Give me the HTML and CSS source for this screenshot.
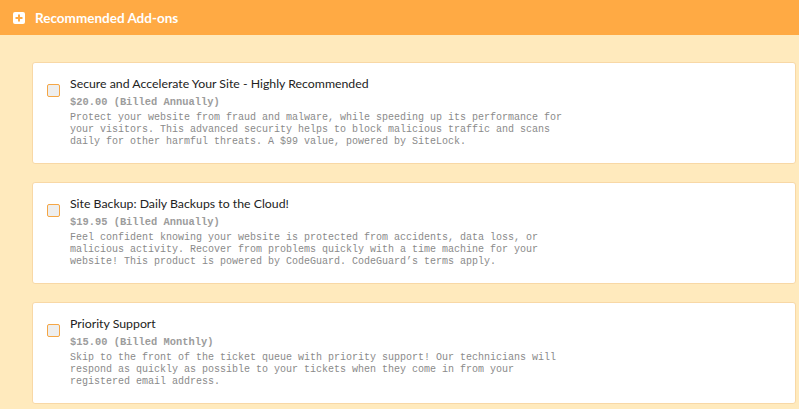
FILE: index.html
```html
<!DOCTYPE html>
<html>
<head>
    <title>Recommended Add-ons</title>
    <link rel="stylesheet" href="styles.css">
</head>
<body>
    <div id="cabecalho">
        <span class="icone-mais">
            <svg width="12" height="12" viewBox="0 0 12 12">
                <rect x="0" y="0" width="12" height="12" rx="2" fill="#fff"/>
                <rect x="5" y="2.5" width="2" height="7" fill="#ffaa44"/>
                <rect x="2.5" y="5" width="7" height="2" fill="#ffaa44"/>
            </svg>
        </span>
        <h1>Recommended Add-ons</h1>
    </div>
    <div id="lista">
        <div class="addon">
            <input type="checkbox" id="addonSiteLock">
            <div class="addon-info">
                <label for="addonSiteLock">Secure and Accelerate Your Site - Highly Recommended</label>
                <div class="preco">$20.00 (Billed Annually)</div>
                <p>Protect your website from fraud and malware, while speeding up its performance for<br>your visitors. This advanced security helps to block malicious traffic and scans<br>daily for other harmful threats. A $99 value, powered by SiteLock.</p>
            </div>
        </div>
        <div class="addon">
            <input type="checkbox" id="addonCodeGuard">
            <div class="addon-info">
                <label for="addonCodeGuard">Site Backup: Daily Backups to the Cloud!</label>
                <div class="preco">$19.95 (Billed Annually)</div>
                <p>Feel confident knowing your website is protected from accidents, data loss, or<br>malicious activity. Recover from problems quickly with a time machine for your<br>website! This product is powered by CodeGuard. CodeGuard’s terms apply.</p>
            </div>
        </div>
        <div class="addon">
            <input type="checkbox" id="addonSuporte">
            <div class="addon-info">
                <label for="addonSuporte">Priority Support</label>
                <div class="preco">$15.00 (Billed Monthly)</div>
                <p>Skip to the front of the ticket queue with priority support! Our technicians will<br>respond as quickly as possible to your tickets when they come in from your<br>registered email address.</p>
            </div>
        </div>
    </div>
</body>
</html>
```

FILE: styles.css
```css
body {
    font-family: Lato, "Open Sans", sans-serif;
    background-color: #ffeabd;
    margin: 0;
}
#cabecalho {
    display: flex;
    align-items: center;
    height: 35px;
    padding-left: 13px;
    background-color: #ffaa44;
}
.icone-mais {
    display: flex;
    margin-right: 10px;
}
#cabecalho h1 {
    margin: 0;
    font-size: 13.5px;
    font-weight: bold;
    color: #fff;
}
#lista {
    display: flex;
    flex-direction: column;
    gap: 18px;
    padding: 27px 3px 0 32px;
}
.addon {
    display: flex;
    align-items: flex-start;
    height: 102px;
    padding: 13px 14px 0 14px;
    box-sizing: border-box;
    background-color: #fff;
    border: 1px solid #f8d8a6;
    border-radius: 3px;
}
.addon input[type="checkbox"] {
    appearance: none;
    width: 13px;
    height: 13px;
    margin: 8px 10px 0 0;
    flex: none;
    background-color: #eee;
    border: 1px solid #f5a645;
    border-radius: 2px;
}
.addon-info label {
    display: block;
    font-size: 12.3px;
    line-height: 16px;
    color: #222;
}
.preco {
    margin-top: 3px;
    font-family: "Liberation Mono", monospace;
    font-weight: bold;
    font-size: 10.4px;
    line-height: 15px;
    color: #9c9c9c;
}
.addon-info p {
    margin: 2px 0 0 0;
    font-family: "Liberation Mono", monospace;
    font-size: 10px;
    line-height: 12px;
    color: #8a8a8a;
}
```
